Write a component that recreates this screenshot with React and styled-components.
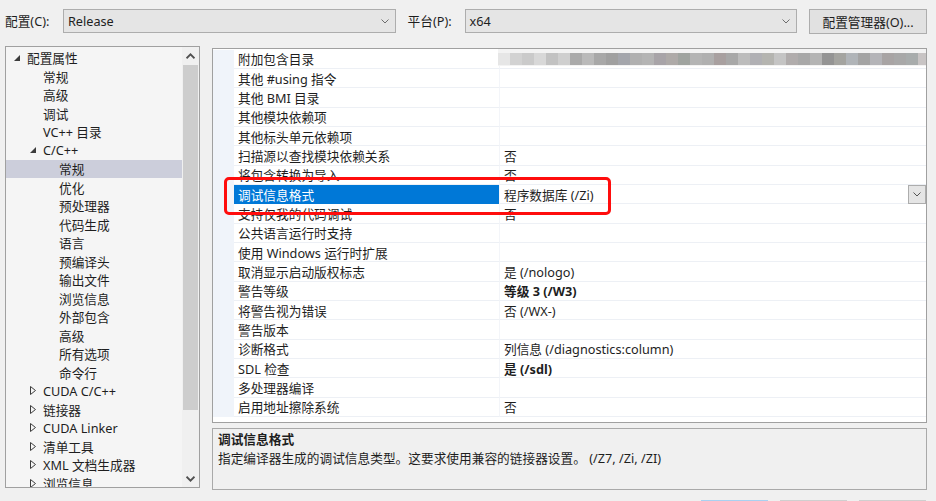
import React from "react";
import styled, { createGlobalStyle } from "styled-components";

const Global = createGlobalStyle`
  html, body { margin: 0; padding: 0; }
  body {
    background: #f0f0f0;
    width: 936px;
    height: 501px;
    overflow: hidden;
    font-family: "Noto Sans", "Noto Sans CJK SC", sans-serif;
    font-size: 12.7px;
    color: #1e1e1e;
  }
  * { box-sizing: border-box; }
`;

const Window = styled.div`
  width: 936px;
  height: 501px;
  display: flex;
  flex-direction: column;
  overflow: hidden;
`;

const TopBar = styled.div`
  height: 42px;
  flex: none;
  display: flex;
  align-items: center;
  padding: 0 9px 0 5px;
`;

const Label = styled.span`
  width: ${(p) => p.$w}px;
  margin-left: ${(p) => p.$ml || 0}px;
  white-space: nowrap;
  line-height: 16px;
`;

const Combo = styled.div`
  width: ${(p) => p.$w}px;
  height: 24px;
  background: #e5e5e5;
  border: 1px solid #adadad;
  display: flex;
  align-items: center;
  justify-content: space-between;
  padding: 0 6px 0 4px;
`;

const Button = styled.div`
  margin-left: 12px;
  width: 118px;
  height: 25px;
  background: #e1e1e1;
  border: 1px solid #adadad;
  display: flex;
  align-items: center;
  justify-content: center;
  white-space: nowrap;
`;

const Main = styled.div`
  flex: none;
  margin-top: 4px;
  display: flex;
  gap: 12px;
  padding-left: 5px;
`;

const Tree = styled.div`
  width: 195px;
  height: 442px;
  border: 1px solid #a0a0a0;
  background: #f5f5f5;
  display: flex;
`;

const TreeList = styled.div`
  flex: 1;
  padding-top: 1.5px;
  overflow: hidden;
`;

const TreeRow = styled.div`
  height: 18.5px;
  display: flex;
  align-items: center;
  padding-left: ${(p) => 8 + 16 * p.$level}px;
  background: ${(p) => (p.$selected ? "#cccedb" : "transparent")};
  white-space: nowrap;
`;

const Twisty = styled.span`
  width: 13px;
  flex: none;
  display: flex;
  align-items: center;
`;

const Scrollbar = styled.div`
  width: 17px;
  flex: none;
  background: #f0f0f0;
  display: flex;
  flex-direction: column;
`;

const ScrollArrow = styled.div`
  height: 17px;
  flex: none;
  display: flex;
  align-items: center;
  justify-content: center;
`;

const ScrollTrack = styled.div`
  flex: 1;
  padding: 1px 1px 0 1px;
`;

const Thumb = styled.div`
  height: 345px;
  background: #cdcdcd;
`;

const RightCol = styled.div`
  width: 715px;
  display: flex;
  flex-direction: column;
`;

const Grid = styled.div`
  position: relative;
  margin-top: 2px;
  height: 375px;
  border: 1px solid #a0a0a0;
  background: #ffffff;
  padding-top: 0.6px;
  overflow: hidden;
`;

const GridRow = styled.div`
  height: 19.35px;
  display: flex;
`;

const Gutter = styled.div`
  width: 21px;
  flex: none;
  background: #f0f4fa;
`;

const NameCell = styled.div`
  width: 265px;
  flex: none;
  padding-left: 4px;
  display: flex;
  align-items: center;
  white-space: nowrap;
  border-bottom: 1px solid ${(p) => (p.$selected ? "#0078d7" : "#edf0f5")};
  background: ${(p) => (p.$selected ? "#0078d7" : "#ffffff")};
  color: ${(p) => (p.$selected ? "#ffffff" : "#1e1e1e")};
`;

const ValueCell = styled.div`
  flex: 1;
  padding-left: 4px;
  display: flex;
  align-items: center;
  justify-content: space-between;
  white-space: nowrap;
  border-left: 1px solid #f3f5f9;
  border-bottom: 1px solid #edf0f5;
  font-weight: ${(p) => (p.$bold ? 700 : 400)};
`;

const DropButton = styled.div`
  align-self: flex-start;
  width: 18px;
  height: 19px;
  background: #e5e5e5;
  border: 1px solid #adadad;
  display: flex;
  align-items: center;
  justify-content: center;
`;

const Highlight = styled.div`
  position: absolute;
  left: 11px;
  top: 128px;
  width: 387px;
  height: 38px;
  border: 3px solid #ff0d0d;
  border-radius: 5px;
  pointer-events: none;
`;

const Mosaic = styled.div`
  position: absolute;
  left: 285px;
  top: -1px;
  right: -1px;
  height: 18px;
  background: #f3f3f3;
  padding-top: 4.5px;
  display: flex;
`;

const MosaicBlock = styled.div`
  width: 12px;
  height: 12.5px;
  flex: none;
`;

const Desc = styled.div`
  margin-top: 5px;
  height: 62px;
  border: 1px solid #a9a9a9;
  background: #f0f0f0;
  padding: 1px 5px 0 5px;
`;

const DescTitle = styled.div`
  font-weight: 700;
  line-height: 19px;
`;

const DescText = styled.div`
  line-height: 19px;
  white-space: nowrap;
`;

const BottomBar = styled.div`
  flex: none;
  margin-top: 10px;
  display: flex;
  justify-content: flex-end;
  gap: 12px;
  padding-right: 10px;
`;

const BottomButton = styled.div`
  width: 67px;
  height: 23px;
  background: ${(p) => (p.$primary ? "#e5f1fb" : "#e1e1e1")};
  border: 1px solid ${(p) => (p.$primary ? "#a9d1f1" : "#cfcfcf")};
`;

const Chevron = ({ up, color = "#6d6d6d", w = 8, h = 5, sw = 1 }) => (
  <svg width={w} height={h} viewBox="0 0 8 5">
    <polyline
      points={up ? "0.5,4.5 4,1 7.5,4.5" : "0.5,0.5 4,4 7.5,0.5"}
      fill="none"
      stroke={color}
      strokeWidth={sw}
    />
  </svg>
);

const Expanded = () => (
  <svg width="6" height="6" viewBox="0 0 6 6">
    <polygon points="6,0 6,6 0,6" fill="#3c3c3c" />
  </svg>
);

const Collapsed = () => (
  <svg width="6" height="9" viewBox="0 0 6 9">
    <polygon points="0.5,0.5 5.5,4.5 0.5,8.5" fill="none" stroke="#3c3c3c" strokeWidth="1" />
  </svg>
);

const treeItems = [
  { t: "配置属性", l: 0, tw: "open" },
  { t: "常规", l: 1 },
  { t: "高级", l: 1 },
  { t: "调试", l: 1 },
  { t: "VC++ 目录", l: 1 },
  { t: "C/C++", l: 1, tw: "open" },
  { t: "常规", l: 2, sel: true },
  { t: "优化", l: 2 },
  { t: "预处理器", l: 2 },
  { t: "代码生成", l: 2 },
  { t: "语言", l: 2 },
  { t: "预编译头", l: 2 },
  { t: "输出文件", l: 2 },
  { t: "浏览信息", l: 2 },
  { t: "外部包含", l: 2 },
  { t: "高级", l: 2 },
  { t: "所有选项", l: 2 },
  { t: "命令行", l: 2 },
  { t: "CUDA C/C++", l: 1, tw: "closed" },
  { t: "链接器", l: 1, tw: "closed" },
  { t: "CUDA Linker", l: 1, tw: "closed" },
  { t: "清单工具", l: 1, tw: "closed" },
  { t: "XML 文档生成器", l: 1, tw: "closed" },
  { t: "浏览信息", l: 1, tw: "closed" },
];

const props = [
  { n: "附加包含目录", v: "" },
  { n: "其他 #using 指令", v: "" },
  { n: "其他 BMI 目录", v: "" },
  { n: "其他模块依赖项", v: "" },
  { n: "其他标头单元依赖项", v: "" },
  { n: "扫描源以查找模块依赖关系", v: "否" },
  { n: "将包含转换为导入", v: "否" },
  { n: "调试信息格式", v: "程序数据库 (/Zi)", sel: true },
  { n: "支持仅我的代码调试", v: "否" },
  { n: "公共语言运行时支持", v: "" },
  { n: "使用 Windows 运行时扩展", v: "" },
  { n: "取消显示启动版权标志", v: "是 (/nologo)" },
  { n: "警告等级", v: "等级 3 (/W3)", b: true },
  { n: "将警告视为错误", v: "否 (/WX-)" },
  { n: "警告版本", v: "" },
  { n: "诊断格式", v: "列信息 (/diagnostics:column)" },
  { n: "SDL 检查", v: "是 (/sdl)", b: true },
  { n: "多处理器编译", v: "" },
  { n: "启用地址擦除系统", v: "否" },
];

const mosaicColors = [
  "#e6e6e6", "#d2d2d2", "#cacaca", "#d8d8d8", "#c2c2c2", "#cfcfcf", "#aaaaaa", "#bababa",
  "#a8a8a8", "#a0a0a0", "#a4a6ac", "#b0b0b0", "#b4b4b4", "#a8a4a8", "#aeaaa8", "#a0a4a0",
  "#b4b4b4", "#b0b0b0", "#a8a0a0", "#a8a8a8", "#bcbcbc", "#b0b0b4", "#b4b4b0", "#c4c4c4",
  "#b0acac", "#a8a8a8", "#b4b4b4", "#949494", "#a4a4a0", "#b0b4b8", "#a4a4a4", "#b4b4b8",
  "#a8a4a4", "#a8a8a8", "#a8acac", "#c8c4c4",
];

export default function App() {
  return (
    <Window>
      <Global />
      <TopBar>
        <Label $w={58}>配置(C):</Label>
        <Combo $w={333}>
          <span>Release</span>
          <Chevron />
        </Combo>
        <Label $w={57} $ml={12}>平台(P):</Label>
        <Combo $w={333}>
          <span>x64</span>
          <Chevron />
        </Combo>
        <Button>配置管理器(O)...</Button>
      </TopBar>
      <Main>
        <Tree>
          <TreeList>
            {treeItems.map((it, i) => (
              <TreeRow key={i} $level={it.l} $selected={it.sel}>
                <Twisty>
                  {it.tw === "open" && <Expanded />}
                  {it.tw === "closed" && <Collapsed />}
                </Twisty>
                {it.t}
              </TreeRow>
            ))}
          </TreeList>
          <Scrollbar>
            <ScrollArrow>
              <Chevron up color="#505050" w={9} h={6} sw={1.6} />
            </ScrollArrow>
            <ScrollTrack>
              <Thumb />
            </ScrollTrack>
            <ScrollArrow>
              <Chevron color="#505050" w={9} h={6} sw={1.6} />
            </ScrollArrow>
          </Scrollbar>
        </Tree>
        <RightCol>
          <Grid>
            {props.map((p, i) => (
              <GridRow key={i}>
                <Gutter />
                <NameCell $selected={p.sel}>{p.n}</NameCell>
                <ValueCell $bold={p.b}>
                  <span>{p.v}</span>
                  {p.sel && (
                    <DropButton>
                      <Chevron color="#555" />
                    </DropButton>
                  )}
                </ValueCell>
              </GridRow>
            ))}
            <Mosaic>
              {mosaicColors.map((c, i) => (
                <MosaicBlock key={i} style={{ background: c }} />
              ))}
            </Mosaic>
            <Highlight />
          </Grid>
          <Desc>
            <DescTitle>调试信息格式</DescTitle>
            <DescText>指定编译器生成的调试信息类型。这要求使用兼容的链接器设置。 (/Z7, /Zi, /ZI)</DescText>
          </Desc>
        </RightCol>
      </Main>
      <BottomBar>
        <BottomButton $primary />
        <BottomButton />
        <BottomButton />
      </BottomBar>
    </Window>
  );
}
